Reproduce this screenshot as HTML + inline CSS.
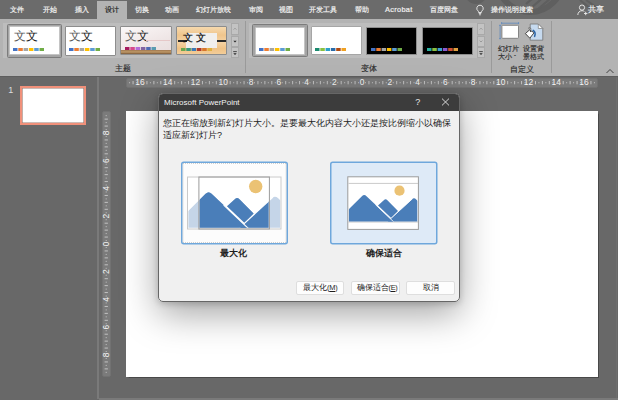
<!DOCTYPE html>
<html><head><meta charset="utf-8">
<style>
*{box-sizing:border-box}
html,body{margin:0;padding:0}
body{width:618px;height:400px;overflow:hidden;position:relative;background:#686868;font-family:"Liberation Sans",sans-serif;}
.a{position:absolute}
.t{position:absolute;white-space:nowrap;line-height:1}
#tabbar{left:0;top:0;width:618px;height:19px;background:#6b6b6b}
.tab{color:#f0f0f0;font-size:7.4px;top:6.2px;-webkit-text-stroke-width:0.2px}
#seltab{left:97px;top:1px;width:30px;height:18px;background:#b3b3b3}
#ribbon{left:0;top:19px;width:618px;height:57px;background:#b3b3b3}
.thumb{position:absolute;background:#fff;border:1px solid #8d8d8d;border-radius:1px}
.sqs{position:absolute;height:3px;display:flex}
.sqs i{display:block;width:4.5px;height:3px;margin-right:0.8px}
.lbl{color:#2a2a2a;font-size:7.5px;-webkit-text-stroke-width:0.15px}
.sep{position:absolute;width:1px;background:#9a9a9a}
.scr{position:absolute;width:8px;background:#c3c3c3;border:1px solid #a9a9a9}
.wen{position:absolute;font-size:12px;line-height:1;color:#3a3a3a;font-family:"Liberation Serif",serif}
</style></head><body>
<div id="tabbar" class="a"></div>
<svg class="a" style="left:440px;top:0" width="178" height="19" viewBox="0 0 178 19"><g fill="none" stroke="#5f5f5f"><circle cx="36" cy="-7" r="11" fill="#606060" stroke="none"/><circle cx="90" cy="-21" r="33" stroke-width="6"/><path d="M86 4 L100 -8 M91 8 L106 -5 M97 10 L111 -2" stroke-width="2.2"/><path d="M140 0 L152 10 M146 0 L156 7" stroke-width="2"/></g></svg>
<div id="ribbon" class="a"></div>
<div id="seltab" class="a"></div>
<span class="t tab" style="left:10px">文件</span>
<span class="t tab" style="left:43px">开始</span>
<span class="t tab" style="left:74.5px">插入</span>
<span class="t tab" style="left:104.5px;color:#262626">设计</span>
<span class="t tab" style="left:135px">切换</span>
<span class="t tab" style="left:165px">动画</span>
<span class="t tab" style="left:196px">幻灯片放映</span>
<span class="t tab" style="left:248.5px">审阅</span>
<span class="t tab" style="left:278.5px">视图</span>
<span class="t tab" style="left:309px">开发工具</span>
<span class="t tab" style="left:354.5px">帮助</span>
<span class="t tab" style="left:385px;letter-spacing:0.3px">Acrobat</span>
<span class="t tab" style="left:429.5px">百度网盘</span>
<span class="t tab" style="left:491px;font-size:7.2px">操作说明搜索</span>
<span class="t tab" style="left:588px;font-size:7.5px">共享</span>
<!-- lightbulb -->
<svg class="a" style="left:475px;top:4px" width="10" height="12" viewBox="0 0 10 12"><path d="M5 1.2a3.2 3.2 0 0 0-2 5.7c.5.5.6 1 .6 1.6h2.8c0-.6.1-1.1.6-1.6A3.2 3.2 0 0 0 5 1.2z" fill="none" stroke="#eee" stroke-width="0.9"/><path d="M3.8 9.6h2.4M4.2 10.8h1.6" stroke="#eee" stroke-width="0.9"/></svg>
<!-- person -->
<svg class="a" style="left:577px;top:4px" width="11" height="12" viewBox="0 0 11 12"><circle cx="5" cy="3.6" r="2.6" fill="none" stroke="#eee" stroke-width="0.9"/><path d="M0.8 11c0-2.5 1.9-4.3 4.2-4.3 1 0 1.8.3 2.4.8" fill="none" stroke="#eee" stroke-width="0.9"/><path d="M7 9.5h3.4M8.7 7.8v3.4" stroke="#eee" stroke-width="0.9"/></svg>

<!-- theme thumbs -->
<div class="a" style="left:2.5px;top:23.3px;width:228px;height:34.8px;background:#bdbdbd"></div>
<div class="a" style="left:249px;top:23.3px;width:227.5px;height:34.8px;background:#bdbdbd"></div>
<div class="a" style="left:7px;top:23.5px;width:55px;height:34px;background:#a4a4a4;border:1px solid #7c7c7c;border-radius:1.5px"></div>
<div class="thumb" style="left:9.2px;top:26px;width:50.6px;height:29px;border-color:#c4c4c4"></div>
<span class="wen" style="left:13.5px;top:30px"><span style="color:#5a5a5a">文</span><span style="color:#1a1a1a">文</span></span>
<svg class="a" style="left:13px;top:48px" width="32" height="3" viewBox="0 0 32 3"><rect x="0.00" y="0" width="4.5" height="3" fill="#4472c4"/><rect x="5.30" y="0" width="4.5" height="3" fill="#ed7d31"/><rect x="10.60" y="0" width="4.5" height="3" fill="#a5a5a5"/><rect x="15.90" y="0" width="4.5" height="3" fill="#ffc000"/><rect x="21.20" y="0" width="4.5" height="3" fill="#5b9bd5"/><rect x="26.50" y="0" width="4.5" height="3" fill="#70ad47"/></svg>

<div class="thumb" style="left:64.5px;top:26px;width:51.5px;height:29.5px"></div>
<span class="wen" style="left:69px;top:30px"><span style="color:#5a5a5a">文</span><span style="color:#1a1a1a">文</span></span>
<svg class="a" style="left:69px;top:48px" width="32" height="3" viewBox="0 0 32 3"><rect x="0.00" y="0" width="4.5" height="3" fill="#4472c4"/><rect x="5.30" y="0" width="4.5" height="3" fill="#ed7d31"/><rect x="10.60" y="0" width="4.5" height="3" fill="#a5a5a5"/><rect x="15.90" y="0" width="4.5" height="3" fill="#ffc000"/><rect x="21.20" y="0" width="4.5" height="3" fill="#5b9bd5"/><rect x="26.50" y="0" width="4.5" height="3" fill="#70ad47"/></svg>

<div class="thumb" style="left:120px;top:26px;width:51.5px;height:29px;background:linear-gradient(160deg,#fbf8f8 0%,#efe6e6 60%,#e8dcdc 100%)"></div>
<div class="a" style="left:121px;top:50.3px;width:49.5px;height:4px;background:linear-gradient(#a07850,#c09a68 50%,#7a5838)"></div>
<span class="wen" style="left:125px;top:30px"><span style="color:#5a5a5a">文</span><span style="color:#1a1a1a">文</span></span>
<div class="a" style="left:146px;top:40px;width:24px;height:1px;background:#e6c8c8"></div>
<svg class="a" style="left:124.5px;top:47.3px" width="32" height="3" viewBox="0 0 32 3"><rect x="0.00" y="0" width="4.5" height="3" fill="#a5195e"/><rect x="5.30" y="0" width="4.5" height="3" fill="#d6478c"/><rect x="10.60" y="0" width="4.5" height="3" fill="#b36ad8"/><rect x="15.90" y="0" width="4.5" height="3" fill="#8064a2"/><rect x="21.20" y="0" width="4.5" height="3" fill="#4f6bb3"/><rect x="26.50" y="0" width="4.5" height="3" fill="#5a9bb0"/></svg>

<div class="thumb" style="left:176px;top:26px;width:51px;height:29px;background:linear-gradient(180deg,#f6d9ae 0%,#f0c58c 30%,#f5d3a4 55%,#efc286 80%,#f3cd98 100%)"></div>
<div class="a" style="left:186px;top:33.2px;width:31px;height:15px;background:#f1efed"></div>
<div class="a" style="left:177.5px;top:39.5px;width:9px;height:2px;background:#2a2a2a"></div>
<div class="a" style="left:217px;top:39.5px;width:9px;height:2px;background:#2a2a2a"></div>
<span class="wen" style="left:182.5px;top:34px;font-size:9.5px;letter-spacing:3.5px;color:#111;-webkit-text-stroke:0.25px #111">文文</span>
<svg class="a" style="left:181px;top:48px" width="32" height="3" viewBox="0 0 32 3"><rect x="0.00" y="0" width="4.5" height="3" fill="#6aa84f"/><rect x="5.30" y="0" width="4.5" height="3" fill="#3a9a7a"/><rect x="10.60" y="0" width="4.5" height="3" fill="#3d7ab8"/><rect x="15.90" y="0" width="4.5" height="3" fill="#b03a2e"/><rect x="21.20" y="0" width="4.5" height="3" fill="#d8752a"/><rect x="26.50" y="0" width="4.5" height="3" fill="#e0b040"/></svg>

<div class="scr" style="left:230.5px;top:23px;height:12px"></div>
<div class="scr" style="left:230.5px;top:35.5px;height:11px"></div>
<div class="scr" style="left:230.5px;top:47px;height:11px"></div>
<svg class="a" style="left:230.5px;top:23px" width="8" height="35" viewBox="0 0 8 35"><path d="M2.6 6.6L4 5.2 5.4 6.6" fill="none" stroke="#8e8e8e" stroke-width="0.8"/><path d="M2.3 17.8L5.7 17.8 4 19.6z" fill="#2a2a2a"/><path d="M2.2 28.6h3.6" stroke="#2a2a2a" stroke-width="0.8"/><path d="M2.3 30.2L5.7 30.2 4 32z" fill="#2a2a2a"/></svg>
<span class="t lbl" style="left:114.5px;top:65px">主题</span>
<div class="sep" style="left:245px;top:21px;height:52px"></div>

<!-- variants -->
<div class="a" style="left:251.8px;top:24px;width:56px;height:33px;background:#a4a4a4;border:1px solid #7c7c7c;border-radius:1.5px"></div>
<div class="thumb" style="left:254.5px;top:26.5px;width:50.8px;height:28px;border-color:#c4c4c4"></div>
<svg class="a" style="left:259px;top:48px" width="32" height="3" viewBox="0 0 32 3"><rect x="0.00" y="0" width="4.5" height="3" fill="#4472c4"/><rect x="5.30" y="0" width="4.5" height="3" fill="#ed7d31"/><rect x="10.60" y="0" width="4.5" height="3" fill="#a5a5a5"/><rect x="15.90" y="0" width="4.5" height="3" fill="#ffc000"/><rect x="21.20" y="0" width="4.5" height="3" fill="#5b9bd5"/><rect x="26.50" y="0" width="4.5" height="3" fill="#70ad47"/></svg>
<div class="thumb" style="left:310.5px;top:26.3px;width:51px;height:28.7px;border-color:#a6a6a6"></div>
<svg class="a" style="left:315px;top:48px" width="32" height="3" viewBox="0 0 32 3"><rect x="0.00" y="0" width="4.5" height="3" fill="#1a8a6e"/><rect x="5.30" y="0" width="4.5" height="3" fill="#8ac040"/><rect x="10.60" y="0" width="4.5" height="3" fill="#2aa0c8"/><rect x="15.90" y="0" width="4.5" height="3" fill="#2a6aa8"/><rect x="21.20" y="0" width="4.5" height="3" fill="#b04a10"/><rect x="26.50" y="0" width="4.5" height="3" fill="#f0a020"/></svg>
<div class="thumb" style="left:366px;top:26.5px;width:51px;height:28.5px;background:#000;border-color:#8d8d8d"></div>
<svg class="a" style="left:370.5px;top:48px" width="32" height="3" viewBox="0 0 32 3"><rect x="0.00" y="0" width="4.5" height="3" fill="#4472c4"/><rect x="5.30" y="0" width="4.5" height="3" fill="#ed7d31"/><rect x="10.60" y="0" width="4.5" height="3" fill="#a5a5a5"/><rect x="15.90" y="0" width="4.5" height="3" fill="#ffc000"/><rect x="21.20" y="0" width="4.5" height="3" fill="#5b9bd5"/><rect x="26.50" y="0" width="4.5" height="3" fill="#70ad47"/></svg>
<div class="thumb" style="left:422px;top:26.5px;width:50.5px;height:28.5px;background:#000;border-color:#8d8d8d"></div>
<svg class="a" style="left:426.5px;top:48px" width="32" height="3" viewBox="0 0 32 3"><rect x="0.00" y="0" width="4.5" height="3" fill="#2ab0a0"/><rect x="5.30" y="0" width="4.5" height="3" fill="#8ac040"/><rect x="10.60" y="0" width="4.5" height="3" fill="#3aa0d0"/><rect x="15.90" y="0" width="4.5" height="3" fill="#8a5ad0"/><rect x="21.20" y="0" width="4.5" height="3" fill="#d05030"/><rect x="26.50" y="0" width="4.5" height="3" fill="#e0a040"/></svg>
<div class="scr" style="left:476.5px;top:23px;height:12px"></div>
<div class="scr" style="left:476.5px;top:35.5px;height:11px"></div>
<div class="scr" style="left:476.5px;top:47px;height:11px"></div>
<svg class="a" style="left:476.5px;top:23px" width="8" height="35" viewBox="0 0 8 35"><path d="M2.6 6.6L4 5.2 5.4 6.6" fill="none" stroke="#8e8e8e" stroke-width="0.8"/><path d="M2.6 17.6L4 19 5.4 17.6" fill="none" stroke="#8e8e8e" stroke-width="0.8"/><path d="M2.2 28.6h3.6" stroke="#2a2a2a" stroke-width="0.8"/><path d="M2.3 30.2L5.7 30.2 4 32z" fill="#2a2a2a"/></svg>
<span class="t lbl" style="left:361px;top:65px">变体</span>
<div class="sep" style="left:491px;top:21px;height:52px"></div>

<!-- customize -->
<svg class="a" style="left:494px;top:19px" width="54" height="24" viewBox="0 0 54 24">
 <rect x="7.9" y="6.3" width="16.6" height="13" rx="0.8" fill="#fff" stroke="#7c7c7c" stroke-width="0.9"/>
 <path d="M7.6 4.2 H24.6 M7.6 3.1 V5.3 M24.6 3.1 V5.3" stroke="#5a86bd" stroke-width="0.8" fill="none"/>
 <path d="M6.1 6.3 V19.7 M5 6.3 H7.2 M5 19.7 H7.2" stroke="#5a86bd" stroke-width="0.8" fill="none"/>
 <path d="M36.2 5 H44.3 L48.8 9.5 V21.2 H36.2 Z" fill="#c6daef" stroke="#7a7a7a" stroke-width="0.9"/>
 <path d="M44.3 5 V9.5 H48.8 Z" fill="#fff" stroke="#7a7a7a" stroke-width="0.7"/>
 <path d="M34 9.4 Q35.6 7.4 37.6 10.2" fill="none" stroke="#666" stroke-width="0.8"/>
 <path d="M31.4 14.6 L35.4 11 L40.2 13.6 L35.8 19.2 Z" fill="#fff" stroke="#333" stroke-width="0.9" stroke-linejoin="round"/>
 <circle cx="36.5" cy="12.3" r="0.6" fill="#333"/><path d="M39.2 11.4 Q42.2 13.4 40.6 17.4" fill="none" stroke="#2a64a6" stroke-width="1.5" stroke-linecap="round"/>
</svg>
<span class="t lbl" style="left:498px;top:44.6px;font-size:7.4px">幻灯片</span>
<span class="t lbl" style="left:498px;top:53.2px;font-size:7.4px">大小 <span style="font-size:6px;position:relative;top:-0.5px">ˇ</span></span>
<span class="t lbl" style="left:523.2px;top:44.6px;font-size:7.4px">设置背</span>
<span class="t lbl" style="left:523.2px;top:53.2px;font-size:7.4px">景格式</span>
<span class="t lbl" style="left:510px;top:65.5px">自定义</span>
<div class="sep" style="left:551px;top:21px;height:52px"></div>
<svg class="a" style="left:605px;top:68px" width="10" height="6" viewBox="0 0 10 6"><path d="M1.5 5L5 1.5 8.5 5" fill="none" stroke="#333" stroke-width="0.9"/></svg>

<!-- workspace -->
<div class="a" style="left:0;top:76px;width:618px;height:1px;background:#5e5e5e"></div>
<div class="a" style="left:97px;top:77px;width:1.5px;height:322px;background:#7a7a7a"></div>
<div class="a" style="left:98.5px;top:398px;width:520px;height:1.5px;background:#7a7a7a"></div>
<div class="a" style="left:616px;top:77px;width:1px;height:321px;background:#6e6e6e"></div>
<span class="t" style="left:8.3px;top:86px;font-size:9px;color:#dedede">1</span>
<div class="a" style="left:20.3px;top:85.7px;width:66px;height:39.7px;background:#fff;border:2px solid #f0907a;box-shadow:inset 0 0 0 0.6px #9a7a70"></div>
<!-- rulers -->
<svg class="a" style="left:126px;top:78px" width="472" height="10" viewBox="0 0 472 10" id="hrul"><rect x="0.5" y="0.5" width="471" height="9" rx="1.5" fill="#7b7b7b" stroke="#727272" stroke-width="1"/><rect x="3.09" y="4" width="1" height="1.3" fill="#b4b4b4"/><rect x="6.56" y="3" width="1" height="3.3" fill="#c2c2c2"/><rect x="10.03" y="4" width="1" height="1.3" fill="#b4b4b4"/><text x="14.00" y="7.3" font-size="8.4" fill="#f6f6f6" text-anchor="middle" font-family="Liberation Sans">16</text><rect x="16.97" y="4" width="1" height="1.3" fill="#b4b4b4"/><rect x="20.44" y="3" width="1" height="3.3" fill="#c2c2c2"/><rect x="23.91" y="4" width="1" height="1.3" fill="#b4b4b4"/><rect x="27.38" y="3" width="1" height="3.3" fill="#c2c2c2"/><rect x="30.84" y="4" width="1" height="1.3" fill="#b4b4b4"/><rect x="34.31" y="3" width="1" height="3.3" fill="#c2c2c2"/><rect x="37.78" y="4" width="1" height="1.3" fill="#b4b4b4"/><text x="41.75" y="7.3" font-size="8.4" fill="#f6f6f6" text-anchor="middle" font-family="Liberation Sans">14</text><rect x="44.72" y="4" width="1" height="1.3" fill="#b4b4b4"/><rect x="48.19" y="3" width="1" height="3.3" fill="#c2c2c2"/><rect x="51.66" y="4" width="1" height="1.3" fill="#b4b4b4"/><rect x="55.12" y="3" width="1" height="3.3" fill="#c2c2c2"/><rect x="58.59" y="4" width="1" height="1.3" fill="#b4b4b4"/><rect x="62.06" y="3" width="1" height="3.3" fill="#c2c2c2"/><rect x="65.53" y="4" width="1" height="1.3" fill="#b4b4b4"/><text x="69.50" y="7.3" font-size="8.4" fill="#f6f6f6" text-anchor="middle" font-family="Liberation Sans">12</text><rect x="72.47" y="4" width="1" height="1.3" fill="#b4b4b4"/><rect x="75.94" y="3" width="1" height="3.3" fill="#c2c2c2"/><rect x="79.41" y="4" width="1" height="1.3" fill="#b4b4b4"/><rect x="82.88" y="3" width="1" height="3.3" fill="#c2c2c2"/><rect x="86.34" y="4" width="1" height="1.3" fill="#b4b4b4"/><rect x="89.81" y="3" width="1" height="3.3" fill="#c2c2c2"/><rect x="93.28" y="4" width="1" height="1.3" fill="#b4b4b4"/><text x="97.25" y="7.3" font-size="8.4" fill="#f6f6f6" text-anchor="middle" font-family="Liberation Sans">10</text><rect x="100.22" y="4" width="1" height="1.3" fill="#b4b4b4"/><rect x="103.69" y="3" width="1" height="3.3" fill="#c2c2c2"/><rect x="107.16" y="4" width="1" height="1.3" fill="#b4b4b4"/><rect x="110.62" y="3" width="1" height="3.3" fill="#c2c2c2"/><rect x="114.09" y="4" width="1" height="1.3" fill="#b4b4b4"/><rect x="117.56" y="3" width="1" height="3.3" fill="#c2c2c2"/><rect x="121.03" y="4" width="1" height="1.3" fill="#b4b4b4"/><text x="125.00" y="7.3" font-size="8.4" fill="#f6f6f6" text-anchor="middle" font-family="Liberation Sans">8</text><rect x="127.97" y="4" width="1" height="1.3" fill="#b4b4b4"/><rect x="131.44" y="3" width="1" height="3.3" fill="#c2c2c2"/><rect x="134.91" y="4" width="1" height="1.3" fill="#b4b4b4"/><rect x="138.38" y="3" width="1" height="3.3" fill="#c2c2c2"/><rect x="141.84" y="4" width="1" height="1.3" fill="#b4b4b4"/><rect x="145.31" y="3" width="1" height="3.3" fill="#c2c2c2"/><rect x="148.78" y="4" width="1" height="1.3" fill="#b4b4b4"/><text x="152.75" y="7.3" font-size="8.4" fill="#f6f6f6" text-anchor="middle" font-family="Liberation Sans">6</text><rect x="155.72" y="4" width="1" height="1.3" fill="#b4b4b4"/><rect x="159.19" y="3" width="1" height="3.3" fill="#c2c2c2"/><rect x="162.66" y="4" width="1" height="1.3" fill="#b4b4b4"/><rect x="166.12" y="3" width="1" height="3.3" fill="#c2c2c2"/><rect x="169.59" y="4" width="1" height="1.3" fill="#b4b4b4"/><rect x="173.06" y="3" width="1" height="3.3" fill="#c2c2c2"/><rect x="176.53" y="4" width="1" height="1.3" fill="#b4b4b4"/><text x="180.50" y="7.3" font-size="8.4" fill="#f6f6f6" text-anchor="middle" font-family="Liberation Sans">4</text><rect x="183.47" y="4" width="1" height="1.3" fill="#b4b4b4"/><rect x="186.94" y="3" width="1" height="3.3" fill="#c2c2c2"/><rect x="190.41" y="4" width="1" height="1.3" fill="#b4b4b4"/><rect x="193.88" y="3" width="1" height="3.3" fill="#c2c2c2"/><rect x="197.34" y="4" width="1" height="1.3" fill="#b4b4b4"/><rect x="200.81" y="3" width="1" height="3.3" fill="#c2c2c2"/><rect x="204.28" y="4" width="1" height="1.3" fill="#b4b4b4"/><text x="208.25" y="7.3" font-size="8.4" fill="#f6f6f6" text-anchor="middle" font-family="Liberation Sans">2</text><rect x="211.22" y="4" width="1" height="1.3" fill="#b4b4b4"/><rect x="214.69" y="3" width="1" height="3.3" fill="#c2c2c2"/><rect x="218.16" y="4" width="1" height="1.3" fill="#b4b4b4"/><rect x="221.62" y="3" width="1" height="3.3" fill="#c2c2c2"/><rect x="225.09" y="4" width="1" height="1.3" fill="#b4b4b4"/><rect x="228.56" y="3" width="1" height="3.3" fill="#c2c2c2"/><rect x="232.03" y="4" width="1" height="1.3" fill="#b4b4b4"/><text x="236.00" y="7.3" font-size="8.4" fill="#f6f6f6" text-anchor="middle" font-family="Liberation Sans">0</text><rect x="238.97" y="4" width="1" height="1.3" fill="#b4b4b4"/><rect x="242.44" y="3" width="1" height="3.3" fill="#c2c2c2"/><rect x="245.91" y="4" width="1" height="1.3" fill="#b4b4b4"/><rect x="249.38" y="3" width="1" height="3.3" fill="#c2c2c2"/><rect x="252.84" y="4" width="1" height="1.3" fill="#b4b4b4"/><rect x="256.31" y="3" width="1" height="3.3" fill="#c2c2c2"/><rect x="259.78" y="4" width="1" height="1.3" fill="#b4b4b4"/><text x="263.75" y="7.3" font-size="8.4" fill="#f6f6f6" text-anchor="middle" font-family="Liberation Sans">2</text><rect x="266.72" y="4" width="1" height="1.3" fill="#b4b4b4"/><rect x="270.19" y="3" width="1" height="3.3" fill="#c2c2c2"/><rect x="273.66" y="4" width="1" height="1.3" fill="#b4b4b4"/><rect x="277.12" y="3" width="1" height="3.3" fill="#c2c2c2"/><rect x="280.59" y="4" width="1" height="1.3" fill="#b4b4b4"/><rect x="284.06" y="3" width="1" height="3.3" fill="#c2c2c2"/><rect x="287.53" y="4" width="1" height="1.3" fill="#b4b4b4"/><text x="291.50" y="7.3" font-size="8.4" fill="#f6f6f6" text-anchor="middle" font-family="Liberation Sans">4</text><rect x="294.47" y="4" width="1" height="1.3" fill="#b4b4b4"/><rect x="297.94" y="3" width="1" height="3.3" fill="#c2c2c2"/><rect x="301.41" y="4" width="1" height="1.3" fill="#b4b4b4"/><rect x="304.88" y="3" width="1" height="3.3" fill="#c2c2c2"/><rect x="308.34" y="4" width="1" height="1.3" fill="#b4b4b4"/><rect x="311.81" y="3" width="1" height="3.3" fill="#c2c2c2"/><rect x="315.28" y="4" width="1" height="1.3" fill="#b4b4b4"/><text x="319.25" y="7.3" font-size="8.4" fill="#f6f6f6" text-anchor="middle" font-family="Liberation Sans">6</text><rect x="322.22" y="4" width="1" height="1.3" fill="#b4b4b4"/><rect x="325.69" y="3" width="1" height="3.3" fill="#c2c2c2"/><rect x="329.16" y="4" width="1" height="1.3" fill="#b4b4b4"/><rect x="332.62" y="3" width="1" height="3.3" fill="#c2c2c2"/><rect x="336.09" y="4" width="1" height="1.3" fill="#b4b4b4"/><rect x="339.56" y="3" width="1" height="3.3" fill="#c2c2c2"/><rect x="343.03" y="4" width="1" height="1.3" fill="#b4b4b4"/><text x="347.00" y="7.3" font-size="8.4" fill="#f6f6f6" text-anchor="middle" font-family="Liberation Sans">8</text><rect x="349.97" y="4" width="1" height="1.3" fill="#b4b4b4"/><rect x="353.44" y="3" width="1" height="3.3" fill="#c2c2c2"/><rect x="356.91" y="4" width="1" height="1.3" fill="#b4b4b4"/><rect x="360.38" y="3" width="1" height="3.3" fill="#c2c2c2"/><rect x="363.84" y="4" width="1" height="1.3" fill="#b4b4b4"/><rect x="367.31" y="3" width="1" height="3.3" fill="#c2c2c2"/><rect x="370.78" y="4" width="1" height="1.3" fill="#b4b4b4"/><text x="374.75" y="7.3" font-size="8.4" fill="#f6f6f6" text-anchor="middle" font-family="Liberation Sans">10</text><rect x="377.72" y="4" width="1" height="1.3" fill="#b4b4b4"/><rect x="381.19" y="3" width="1" height="3.3" fill="#c2c2c2"/><rect x="384.66" y="4" width="1" height="1.3" fill="#b4b4b4"/><rect x="388.12" y="3" width="1" height="3.3" fill="#c2c2c2"/><rect x="391.59" y="4" width="1" height="1.3" fill="#b4b4b4"/><rect x="395.06" y="3" width="1" height="3.3" fill="#c2c2c2"/><rect x="398.53" y="4" width="1" height="1.3" fill="#b4b4b4"/><text x="402.50" y="7.3" font-size="8.4" fill="#f6f6f6" text-anchor="middle" font-family="Liberation Sans">12</text><rect x="405.47" y="4" width="1" height="1.3" fill="#b4b4b4"/><rect x="408.94" y="3" width="1" height="3.3" fill="#c2c2c2"/><rect x="412.41" y="4" width="1" height="1.3" fill="#b4b4b4"/><rect x="415.88" y="3" width="1" height="3.3" fill="#c2c2c2"/><rect x="419.34" y="4" width="1" height="1.3" fill="#b4b4b4"/><rect x="422.81" y="3" width="1" height="3.3" fill="#c2c2c2"/><rect x="426.28" y="4" width="1" height="1.3" fill="#b4b4b4"/><text x="430.25" y="7.3" font-size="8.4" fill="#f6f6f6" text-anchor="middle" font-family="Liberation Sans">14</text><rect x="433.22" y="4" width="1" height="1.3" fill="#b4b4b4"/><rect x="436.69" y="3" width="1" height="3.3" fill="#c2c2c2"/><rect x="440.16" y="4" width="1" height="1.3" fill="#b4b4b4"/><rect x="443.62" y="3" width="1" height="3.3" fill="#c2c2c2"/><rect x="447.09" y="4" width="1" height="1.3" fill="#b4b4b4"/><rect x="450.56" y="3" width="1" height="3.3" fill="#c2c2c2"/><rect x="454.03" y="4" width="1" height="1.3" fill="#b4b4b4"/><text x="458.00" y="7.3" font-size="8.4" fill="#f6f6f6" text-anchor="middle" font-family="Liberation Sans">16</text><rect x="460.97" y="4" width="1" height="1.3" fill="#b4b4b4"/><rect x="464.44" y="3" width="1" height="3.3" fill="#c2c2c2"/><rect x="467.91" y="4" width="1" height="1.3" fill="#b4b4b4"/></svg>
<svg class="a" style="left:102px;top:111px" width="9" height="266" viewBox="0 0 9 266" id="vrul"><rect x="0.5" y="0.5" width="8" height="265" rx="1.5" fill="#7b7b7b" stroke="#727272" stroke-width="1"/><rect x="3.6" y="4.16" width="1.3" height="1" fill="#b4b4b4"/><rect x="2.6" y="7.62" width="3.3" height="1" fill="#c2c2c2"/><rect x="3.6" y="11.09" width="1.3" height="1" fill="#b4b4b4"/><rect x="2.6" y="14.56" width="3.3" height="1" fill="#c2c2c2"/><rect x="3.6" y="18.03" width="1.3" height="1" fill="#b4b4b4"/><text x="0" y="0" transform="translate(6.9 22.00) rotate(-90)" font-size="8.4" fill="#f6f6f6" text-anchor="middle" font-family="Liberation Sans">8</text><rect x="3.6" y="24.97" width="1.3" height="1" fill="#b4b4b4"/><rect x="2.6" y="28.44" width="3.3" height="1" fill="#c2c2c2"/><rect x="3.6" y="31.91" width="1.3" height="1" fill="#b4b4b4"/><rect x="2.6" y="35.38" width="3.3" height="1" fill="#c2c2c2"/><rect x="3.6" y="38.84" width="1.3" height="1" fill="#b4b4b4"/><rect x="2.6" y="42.31" width="3.3" height="1" fill="#c2c2c2"/><rect x="3.6" y="45.78" width="1.3" height="1" fill="#b4b4b4"/><text x="0" y="0" transform="translate(6.9 49.75) rotate(-90)" font-size="8.4" fill="#f6f6f6" text-anchor="middle" font-family="Liberation Sans">6</text><rect x="3.6" y="52.72" width="1.3" height="1" fill="#b4b4b4"/><rect x="2.6" y="56.19" width="3.3" height="1" fill="#c2c2c2"/><rect x="3.6" y="59.66" width="1.3" height="1" fill="#b4b4b4"/><rect x="2.6" y="63.12" width="3.3" height="1" fill="#c2c2c2"/><rect x="3.6" y="66.59" width="1.3" height="1" fill="#b4b4b4"/><rect x="2.6" y="70.06" width="3.3" height="1" fill="#c2c2c2"/><rect x="3.6" y="73.53" width="1.3" height="1" fill="#b4b4b4"/><text x="0" y="0" transform="translate(6.9 77.50) rotate(-90)" font-size="8.4" fill="#f6f6f6" text-anchor="middle" font-family="Liberation Sans">4</text><rect x="3.6" y="80.47" width="1.3" height="1" fill="#b4b4b4"/><rect x="2.6" y="83.94" width="3.3" height="1" fill="#c2c2c2"/><rect x="3.6" y="87.41" width="1.3" height="1" fill="#b4b4b4"/><rect x="2.6" y="90.88" width="3.3" height="1" fill="#c2c2c2"/><rect x="3.6" y="94.34" width="1.3" height="1" fill="#b4b4b4"/><rect x="2.6" y="97.81" width="3.3" height="1" fill="#c2c2c2"/><rect x="3.6" y="101.28" width="1.3" height="1" fill="#b4b4b4"/><text x="0" y="0" transform="translate(6.9 105.25) rotate(-90)" font-size="8.4" fill="#f6f6f6" text-anchor="middle" font-family="Liberation Sans">2</text><rect x="3.6" y="108.22" width="1.3" height="1" fill="#b4b4b4"/><rect x="2.6" y="111.69" width="3.3" height="1" fill="#c2c2c2"/><rect x="3.6" y="115.16" width="1.3" height="1" fill="#b4b4b4"/><rect x="2.6" y="118.62" width="3.3" height="1" fill="#c2c2c2"/><rect x="3.6" y="122.09" width="1.3" height="1" fill="#b4b4b4"/><rect x="2.6" y="125.56" width="3.3" height="1" fill="#c2c2c2"/><rect x="3.6" y="129.03" width="1.3" height="1" fill="#b4b4b4"/><text x="0" y="0" transform="translate(6.9 133.00) rotate(-90)" font-size="8.4" fill="#f6f6f6" text-anchor="middle" font-family="Liberation Sans">0</text><rect x="3.6" y="135.97" width="1.3" height="1" fill="#b4b4b4"/><rect x="2.6" y="139.44" width="3.3" height="1" fill="#c2c2c2"/><rect x="3.6" y="142.91" width="1.3" height="1" fill="#b4b4b4"/><rect x="2.6" y="146.38" width="3.3" height="1" fill="#c2c2c2"/><rect x="3.6" y="149.84" width="1.3" height="1" fill="#b4b4b4"/><rect x="2.6" y="153.31" width="3.3" height="1" fill="#c2c2c2"/><rect x="3.6" y="156.78" width="1.3" height="1" fill="#b4b4b4"/><text x="0" y="0" transform="translate(6.9 160.75) rotate(-90)" font-size="8.4" fill="#f6f6f6" text-anchor="middle" font-family="Liberation Sans">2</text><rect x="3.6" y="163.72" width="1.3" height="1" fill="#b4b4b4"/><rect x="2.6" y="167.19" width="3.3" height="1" fill="#c2c2c2"/><rect x="3.6" y="170.66" width="1.3" height="1" fill="#b4b4b4"/><rect x="2.6" y="174.12" width="3.3" height="1" fill="#c2c2c2"/><rect x="3.6" y="177.59" width="1.3" height="1" fill="#b4b4b4"/><rect x="2.6" y="181.06" width="3.3" height="1" fill="#c2c2c2"/><rect x="3.6" y="184.53" width="1.3" height="1" fill="#b4b4b4"/><text x="0" y="0" transform="translate(6.9 188.50) rotate(-90)" font-size="8.4" fill="#f6f6f6" text-anchor="middle" font-family="Liberation Sans">4</text><rect x="3.6" y="191.47" width="1.3" height="1" fill="#b4b4b4"/><rect x="2.6" y="194.94" width="3.3" height="1" fill="#c2c2c2"/><rect x="3.6" y="198.41" width="1.3" height="1" fill="#b4b4b4"/><rect x="2.6" y="201.88" width="3.3" height="1" fill="#c2c2c2"/><rect x="3.6" y="205.34" width="1.3" height="1" fill="#b4b4b4"/><rect x="2.6" y="208.81" width="3.3" height="1" fill="#c2c2c2"/><rect x="3.6" y="212.28" width="1.3" height="1" fill="#b4b4b4"/><text x="0" y="0" transform="translate(6.9 216.25) rotate(-90)" font-size="8.4" fill="#f6f6f6" text-anchor="middle" font-family="Liberation Sans">6</text><rect x="3.6" y="219.22" width="1.3" height="1" fill="#b4b4b4"/><rect x="2.6" y="222.69" width="3.3" height="1" fill="#c2c2c2"/><rect x="3.6" y="226.16" width="1.3" height="1" fill="#b4b4b4"/><rect x="2.6" y="229.62" width="3.3" height="1" fill="#c2c2c2"/><rect x="3.6" y="233.09" width="1.3" height="1" fill="#b4b4b4"/><rect x="2.6" y="236.56" width="3.3" height="1" fill="#c2c2c2"/><rect x="3.6" y="240.03" width="1.3" height="1" fill="#b4b4b4"/><text x="0" y="0" transform="translate(6.9 244.00) rotate(-90)" font-size="8.4" fill="#f6f6f6" text-anchor="middle" font-family="Liberation Sans">8</text><rect x="3.6" y="246.97" width="1.3" height="1" fill="#b4b4b4"/><rect x="2.6" y="250.44" width="3.3" height="1" fill="#c2c2c2"/><rect x="3.6" y="253.91" width="1.3" height="1" fill="#b4b4b4"/><rect x="2.6" y="257.38" width="3.3" height="1" fill="#c2c2c2"/><rect x="3.6" y="260.84" width="1.3" height="1" fill="#b4b4b4"/></svg>
<!-- slide -->
<div class="a" style="left:125.5px;top:111.4px;width:472.5px;height:265.8px;background:#fff;box-shadow:0.5px 0.5px 1px rgba(0,0,0,0.3)"></div>
<!-- dialog -->
<div class="a" style="left:158px;top:93px;width:302px;height:209px;border-radius:5px;box-shadow:0 12px 36px rgba(0,0,0,0.36), 0 2px 6px rgba(0,0,0,0.18)"></div>
<div class="a" style="left:158px;top:93px;width:302px;height:209px;border-radius:5px;background:#f0f0f0;border:1px solid #666;overflow:hidden">
  <div class="a" style="left:0;top:0;width:300px;height:17px;background:#3c3c3c"></div>
</div>
<span class="t" style="left:164px;top:98.7px;font-size:8px;color:#f2f2f2">Microsoft PowerPoint</span>
<span class="t" style="left:415.3px;top:97.6px;font-size:9px;color:#e8e8e8">?</span>
<svg class="a" style="left:441px;top:98px" width="9" height="8" viewBox="0 0 9 8"><path d="M1 0.6l7 6.8M8 0.6l-7 6.8" stroke="#e6e6e6" stroke-width="0.9"/></svg>
<span class="t" style="left:163px;top:118.5px;font-size:9px;color:#1e1e1e">您正在缩放到新幻灯片大小。是要最大化内容大小还是按比例缩小以确保</span>
<span class="t" style="left:163px;top:130.5px;font-size:9px;color:#1e1e1e">适应新幻灯片?</span>

<!-- options -->
<svg class="a" style="left:0;top:0" width="618" height="400" viewBox="0 0 618 400">
<defs>
 <g id="pic">
  <path d="M30 22.4 L35.8 17 Q37.6 15.3 39.4 17 L50 27.7 L43.2 34.9z"/>
  <path d="M38.2 39.6 L63.8 16.2 Q66 14 68.2 16.2 L92 39.6z"/>
  <path d="M38.2 39.6 L64.5 15.5" stroke="#fff" stroke-width="0.85" fill="none"/>
  <path d="M-13 39.6 L13.9 13 Q16.2 10.7 18.5 13 L46.7 39.6z"/>
  <path d="M27.5 21.5 L46.7 39.6" stroke="#fff" stroke-width="0.85" fill="none"/>
 </g>
 <clipPath id="c1o"><rect x="188.4" y="176.5" width="91.8" height="51.3"/></clipPath>
 <clipPath id="c1i"><rect x="199.6" y="176.5" width="69" height="51.3"/></clipPath>
 <clipPath id="c2"><rect x="348.9" y="183.2" width="68.4" height="38.3"/></clipPath>
</defs>
<rect x="181.75" y="162.25" width="105.5" height="81.5" rx="2" fill="#fcfcfc" stroke="#6ea7dc" stroke-width="1.5"/>
<rect x="183" y="163.5" width="103" height="79" fill="none" stroke="#a8a29c" stroke-width="0.5" stroke-dasharray="1 1"/>
<rect x="187" y="176.5" width="94.5" height="52.5" fill="#fff"/>
<g clip-path="url(#c1o)"><use href="#pic" transform="translate(187 176.5) scale(1.3333)" fill="#c5d5e8"/></g>
<g clip-path="url(#c1i)"><circle cx="255.7" cy="186.5" r="6.7" fill="#ebc274"/><use href="#pic" transform="translate(187 176.5) scale(1.3333)" fill="#4a7eb9"/></g>
<rect x="187.5" y="177" width="93.5" height="52" fill="none" stroke="#cacaca" stroke-width="1"/>
<rect x="198.9" y="177" width="70.5" height="52" fill="none" stroke="#9c9c9c" stroke-width="1"/>

<rect x="330.75" y="162.25" width="106" height="81.5" rx="2" fill="#deeaf7" stroke="#6ea7dc" stroke-width="1.5"/>
<rect x="347.8" y="176.8" width="70.6" height="52.6" fill="#fff" stroke="#9c9c9c" stroke-width="1"/>
<path d="M348.3 183.4 H418 M348.3 222 H418" stroke="#cacaca" stroke-width="1"/>
<g clip-path="url(#c2)"><circle cx="399.5" cy="190.7" r="5.1" fill="#ebc274"/><use href="#pic" transform="translate(348 183.2)" fill="#4a7eb9"/></g>
</svg>
<span class="t" style="left:220px;top:248.5px;font-size:9px;font-weight:bold;color:#1e1e1e">最大化</span>
<span class="t" style="left:365.5px;top:248.5px;font-size:9px;font-weight:bold;color:#1e1e1e">确保适合</span>

<!-- buttons -->
<div class="a" style="left:296px;top:280.5px;width:48px;height:14px;background:#fdfdfd;border:1px solid #dedede;border-radius:2px"></div>
<div class="a" style="left:351px;top:280.5px;width:48.5px;height:14px;background:#fdfdfd;border:1px solid #dedede;border-radius:2px"></div>
<div class="a" style="left:406.3px;top:280.5px;width:48.5px;height:14px;background:#fdfdfd;border:1px solid #dedede;border-radius:2px"></div>
<span class="t" style="left:303px;top:283.5px;font-size:8px;color:#1e1e1e">最大化<span style="font-size:7.4px;letter-spacing:-0.2px">(<u>M</u>)</span></span>
<span class="t" style="left:356.5px;top:283.5px;font-size:8px;color:#1e1e1e">确保适合<span style="font-size:7.4px;letter-spacing:-0.3px">(<u>E</u>)</span></span>
<span class="t" style="left:423px;top:283.5px;font-size:8px;color:#1e1e1e">取消</span>
</body></html>
